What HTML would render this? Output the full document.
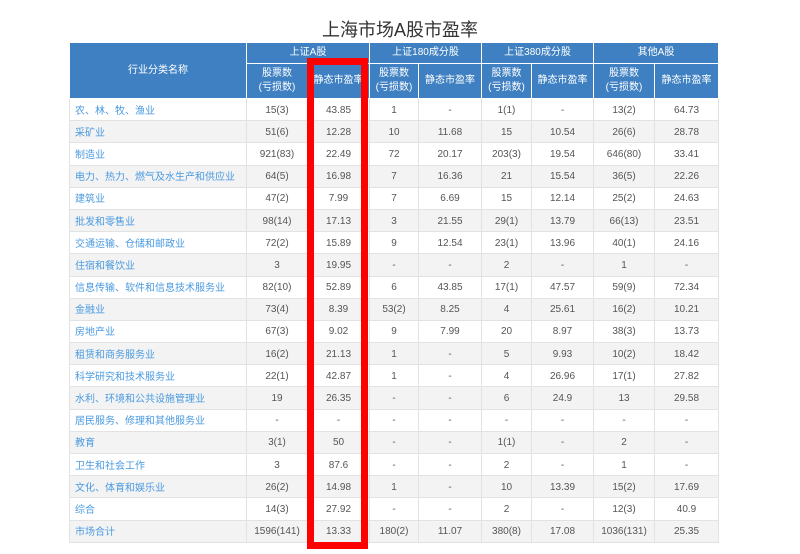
<!DOCTYPE html>
<html><head><meta charset="utf-8"><style>
body{margin:0;width:800px;height:554px;background:#fff;position:relative;overflow:hidden;font-family:"Liberation Sans","Noto Sans CJK SC",sans-serif;}
h1{position:absolute;top:18px;left:0;width:800px;text-align:center;margin:0;font-size:18px;font-weight:normal;color:#333;line-height:24px;}
table{position:absolute;left:69px;top:42px;border-collapse:collapse;font-size:10px;table-layout:fixed;}
th{background:#3f80c2;color:#fff;font-weight:normal;border:1px solid #fff;text-align:center;line-height:14px;padding:0;}
td{border:1px solid #e2e2e2;text-align:center;color:#555;height:19.2px;padding:2px 0 0 0;line-height:12px;vertical-align:middle;}
td.n{text-align:left;padding:0 0 0 5px;height:21.2px;color:#4a9ae0;font-family:"Noto Sans CJK SC",sans-serif;}
tr:nth-child(even) td{background:#f3f3f3;}
.box{position:absolute;left:307px;top:58px;width:47px;height:477px;border:7px solid #f00;}
</style></head><body>
<h1>上海市场A股市盈率</h1>
<table>
<colgroup><col style="width:177px"><col style="width:61px"><col style="width:62px"><col style="width:49px"><col style="width:63px"><col style="width:50px"><col style="width:62px"><col style="width:61px"><col style="width:64px"></colgroup>
<thead>
<tr style="height:21px"><th rowspan="2">行业分类名称</th><th colspan="2">上证A股</th><th colspan="2">上证180成分股</th><th colspan="2">上证380成分股</th><th colspan="2">其他A股</th></tr>
<tr style="height:35px"><th>股票数<br>(亏损数)</th><th>静态市盈率</th><th>股票数<br>(亏损数)</th><th>静态市盈率</th><th>股票数<br>(亏损数)</th><th>静态市盈率</th><th>股票数<br>(亏损数)</th><th>静态市盈率</th></tr>
</thead>
<tbody>
<tr><td class="n">农、林、牧、渔业</td><td>15(3)</td><td>43.85</td><td>1</td><td>-</td><td>1(1)</td><td>-</td><td>13(2)</td><td>64.73</td></tr>
<tr><td class="n">采矿业</td><td>51(6)</td><td>12.28</td><td>10</td><td>11.68</td><td>15</td><td>10.54</td><td>26(6)</td><td>28.78</td></tr>
<tr><td class="n">制造业</td><td>921(83)</td><td>22.49</td><td>72</td><td>20.17</td><td>203(3)</td><td>19.54</td><td>646(80)</td><td>33.41</td></tr>
<tr><td class="n">电力、热力、燃气及水生产和供应业</td><td>64(5)</td><td>16.98</td><td>7</td><td>16.36</td><td>21</td><td>15.54</td><td>36(5)</td><td>22.26</td></tr>
<tr><td class="n">建筑业</td><td>47(2)</td><td>7.99</td><td>7</td><td>6.69</td><td>15</td><td>12.14</td><td>25(2)</td><td>24.63</td></tr>
<tr><td class="n">批发和零售业</td><td>98(14)</td><td>17.13</td><td>3</td><td>21.55</td><td>29(1)</td><td>13.79</td><td>66(13)</td><td>23.51</td></tr>
<tr><td class="n">交通运输、仓储和邮政业</td><td>72(2)</td><td>15.89</td><td>9</td><td>12.54</td><td>23(1)</td><td>13.96</td><td>40(1)</td><td>24.16</td></tr>
<tr><td class="n">住宿和餐饮业</td><td>3</td><td>19.95</td><td>-</td><td>-</td><td>2</td><td>-</td><td>1</td><td>-</td></tr>
<tr><td class="n">信息传输、软件和信息技术服务业</td><td>82(10)</td><td>52.89</td><td>6</td><td>43.85</td><td>17(1)</td><td>47.57</td><td>59(9)</td><td>72.34</td></tr>
<tr><td class="n">金融业</td><td>73(4)</td><td>8.39</td><td>53(2)</td><td>8.25</td><td>4</td><td>25.61</td><td>16(2)</td><td>10.21</td></tr>
<tr><td class="n">房地产业</td><td>67(3)</td><td>9.02</td><td>9</td><td>7.99</td><td>20</td><td>8.97</td><td>38(3)</td><td>13.73</td></tr>
<tr><td class="n">租赁和商务服务业</td><td>16(2)</td><td>21.13</td><td>1</td><td>-</td><td>5</td><td>9.93</td><td>10(2)</td><td>18.42</td></tr>
<tr><td class="n">科学研究和技术服务业</td><td>22(1)</td><td>42.87</td><td>1</td><td>-</td><td>4</td><td>26.96</td><td>17(1)</td><td>27.82</td></tr>
<tr><td class="n">水利、环境和公共设施管理业</td><td>19</td><td>26.35</td><td>-</td><td>-</td><td>6</td><td>24.9</td><td>13</td><td>29.58</td></tr>
<tr><td class="n">居民服务、修理和其他服务业</td><td>-</td><td>-</td><td>-</td><td>-</td><td>-</td><td>-</td><td>-</td><td>-</td></tr>
<tr><td class="n">教育</td><td>3(1)</td><td>50</td><td>-</td><td>-</td><td>1(1)</td><td>-</td><td>2</td><td>-</td></tr>
<tr><td class="n">卫生和社会工作</td><td>3</td><td>87.6</td><td>-</td><td>-</td><td>2</td><td>-</td><td>1</td><td>-</td></tr>
<tr><td class="n">文化、体育和娱乐业</td><td>26(2)</td><td>14.98</td><td>1</td><td>-</td><td>10</td><td>13.39</td><td>15(2)</td><td>17.69</td></tr>
<tr><td class="n">综合</td><td>14(3)</td><td>27.92</td><td>-</td><td>-</td><td>2</td><td>-</td><td>12(3)</td><td>40.9</td></tr>
<tr><td class="n">市场合计</td><td>1596(141)</td><td>13.33</td><td>180(2)</td><td>11.07</td><td>380(8)</td><td>17.08</td><td>1036(131)</td><td>25.35</td></tr>
</tbody></table>
<div class="box"></div>
</body></html>
